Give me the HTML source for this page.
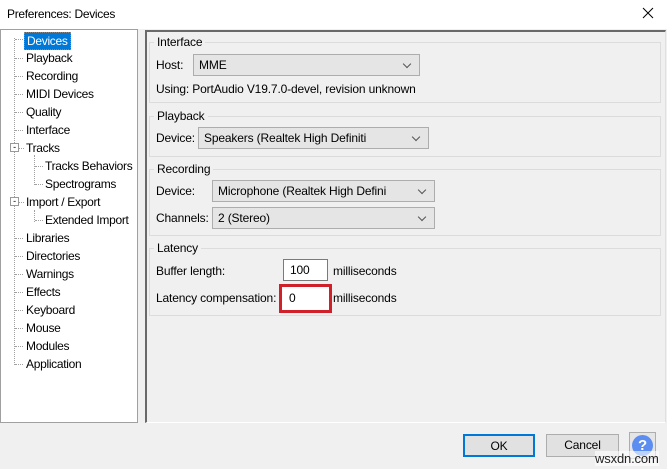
<!DOCTYPE html>
<html><head><style>
*{margin:0;padding:0;box-sizing:border-box}
body{width:667px;height:469px;background:#f0f0f0;font-family:"Liberation Sans",sans-serif;font-size:12px;color:#000;position:relative;overflow:hidden;letter-spacing:-0.15px}
.a{position:absolute;white-space:nowrap}
.title{left:0;top:0;width:667px;height:29px;background:#fff}
.tree{left:0;top:29px;width:138px;height:394px;background:#fff;border:1px solid #a0a0a0}
.ti{position:absolute;font-size:12px;line-height:16px;letter-spacing:-0.3px}
.dh{position:absolute;border-top:1px dotted #a0a0a0;width:8px}
.dv{position:absolute;border-left:1px dotted #a0a0a0}
.panel{left:145px;top:30px;width:521px;height:393px;border-top:2px solid #696969;border-left:2px solid #696969;border-right:1px solid #e0e0e0;border-bottom:1px solid #fff}
.grp{position:absolute;border:1px solid #dcdcdc;left:149px;width:512px}
.gl{position:absolute;background:#f0f0f0;padding:0 3px;left:154px}
.cb{position:absolute;background:#e5e5e5;border:1px solid #adadad;height:22px;line-height:20px;padding-left:5px}
.cb:after{content:"";position:absolute;right:9px;top:6px;width:5px;height:5px;border-right:1px solid #555;border-bottom:1px solid #555;transform:rotate(45deg)}
.tb{position:absolute;background:#fff;border:1px solid #7a7a7a;height:22px;line-height:20px;padding-left:6px}
.btn{position:absolute;background:#e1e1e1;border:1px solid #adadad;height:23px;line-height:21px;text-align:center}
</style></head><body>
<div class="a title"></div>
<div class="a" style="left:7px;top:7px;font-size:12px;letter-spacing:-0.3px">Preferences: Devices</div>
<svg class="a" style="left:642px;top:7px" width="12" height="12"><path d="M1 1L11 11M11 1L1 11" stroke="#000" stroke-width="1"/></svg>

<div class="a tree">
<div class="dv" style="left:13px;top:8px;height:327px"></div>
<div class="dv" style="left:33px;top:125px;height:30px"></div>
<div class="dv" style="left:33px;top:180px;height:12px"></div>
<div class="dh" style="left:14px;top:9px"></div>
<div class="ti" style="left:23px;top:2px;background:#0078d7;color:#fff;padding:0 2px;border:1px dotted #888">Devices</div>
<div class="dh" style="left:14px;top:28px"></div><div class="ti" style="left:25px;top:20px">Playback</div>
<div class="dh" style="left:14px;top:46px"></div><div class="ti" style="left:25px;top:38px">Recording</div>
<div class="dh" style="left:14px;top:64px"></div><div class="ti" style="left:25px;top:56px">MIDI Devices</div>
<div class="dh" style="left:14px;top:82px"></div><div class="ti" style="left:25px;top:74px">Quality</div>
<div class="dh" style="left:14px;top:100px"></div><div class="ti" style="left:25px;top:92px">Interface</div>
<div class="a" style="left:9px;top:113px;width:9px;height:9px;border:1px solid #999;background:#fff;font-size:9px;line-height:6px;text-align:center">-</div>
<div class="dh" style="left:18px;top:118px;width:5px"></div><div class="ti" style="left:25px;top:110px">Tracks</div>
<div class="dh" style="left:34px;top:136px"></div><div class="ti" style="left:44px;top:128px">Tracks Behaviors</div>
<div class="dh" style="left:34px;top:154px"></div><div class="ti" style="left:44px;top:146px">Spectrograms</div>
<div class="a" style="left:9px;top:167px;width:9px;height:9px;border:1px solid #999;background:#fff;font-size:9px;line-height:6px;text-align:center">-</div>
<div class="dh" style="left:18px;top:172px;width:5px"></div><div class="ti" style="left:25px;top:164px">Import / Export</div>
<div class="dh" style="left:34px;top:190px"></div><div class="ti" style="left:44px;top:182px">Extended Import</div>
<div class="dh" style="left:14px;top:208px"></div><div class="ti" style="left:25px;top:200px">Libraries</div>
<div class="dh" style="left:14px;top:226px"></div><div class="ti" style="left:25px;top:218px">Directories</div>
<div class="dh" style="left:14px;top:244px"></div><div class="ti" style="left:25px;top:236px">Warnings</div>
<div class="dh" style="left:14px;top:262px"></div><div class="ti" style="left:25px;top:254px">Effects</div>
<div class="dh" style="left:14px;top:280px"></div><div class="ti" style="left:25px;top:272px">Keyboard</div>
<div class="dh" style="left:14px;top:298px"></div><div class="ti" style="left:25px;top:290px">Mouse</div>
<div class="dh" style="left:14px;top:316px"></div><div class="ti" style="left:25px;top:308px">Modules</div>
<div class="dh" style="left:14px;top:334px"></div><div class="ti" style="left:25px;top:326px">Application</div>
</div>

<div class="a panel"></div>

<div class="grp" style="top:42px;height:61px"></div><div class="gl a" style="top:35px">Interface</div>
<div class="a" style="left:156px;top:58px">Host:</div>
<div class="cb" style="left:193px;top:54px;width:227px">MME</div>
<div class="a" style="left:156px;top:82px">Using: PortAudio V19.7.0-devel, revision unknown</div>

<div class="grp" style="top:116px;height:41px"></div><div class="gl a" style="top:109px">Playback</div>
<div class="a" style="left:156px;top:131px">Device:</div>
<div class="cb" style="left:198px;top:127px;width:231px">Speakers (Realtek High Definiti</div>

<div class="grp" style="top:169px;height:67px"></div><div class="gl a" style="top:162px">Recording</div>
<div class="a" style="left:156px;top:184px">Device:</div>
<div class="cb" style="left:212px;top:180px;width:223px">Microphone (Realtek High Defini</div>
<div class="a" style="left:156px;top:211px">Channels:</div>
<div class="cb" style="left:212px;top:207px;width:223px">2 (Stereo)</div>

<div class="grp" style="top:248px;height:68px"></div><div class="gl a" style="top:241px">Latency</div>
<div class="a" style="left:156px;top:264px">Buffer length:</div>
<div class="tb" style="left:283px;top:259px;width:45px">100</div>
<div class="a" style="left:333px;top:264px">milliseconds</div>
<div class="a" style="left:156px;top:291px">Latency compensation:</div>
<div class="a" style="left:279px;top:284px;width:53px;height:29px;border:3px solid #d0202a;background:#fff"></div>
<div class="a" style="left:289px;top:291px">0</div>
<div class="a" style="left:333px;top:291px">milliseconds</div>

<div class="btn" style="left:463px;top:434px;width:72px;border:2px solid #0078d7">OK</div>
<div class="btn" style="left:546px;top:434px;width:73px">Cancel</div>
<div class="btn" style="left:629px;top:432px;width:27px;height:27px;background:#e5e5e5"><div style="position:absolute;left:2px;top:2px;width:21px;height:21px;border-radius:50%;background:#5b8ef0;color:#fff;font-weight:bold;font-size:15px;line-height:21px">?</div></div>
<div class="a" style="left:595px;top:451px;font-size:13px;color:#222;background:rgba(255,255,255,.6)">wsxdn.com</div>
</body></html>
